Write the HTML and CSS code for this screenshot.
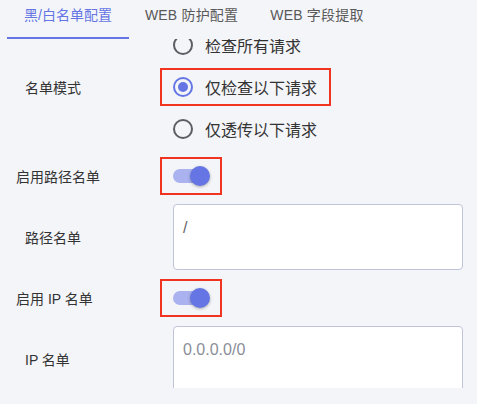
FILE: index.html
```html
<!DOCTYPE html>
<html lang="zh">
<head>
<meta charset="utf-8">
<link rel="stylesheet" href="styles.css">
</head>
<body>
<div class="tabs">
  <div class="tab active">黑/白名单配置</div>
  <div class="tab">WEB 防护配置</div>
  <div class="tab">WEB 字段提取</div>
</div>
<div class="viewport">
  <div class="content">
    <div class="row">
      <div class="label">名单模式</div>
      <div class="radios">
        <div class="option"><span class="radio"></span><span>检查所有请求</span></div>
        <div class="option marked"><span class="radio checked"></span><span>仅检查以下请求</span></div>
        <div class="option"><span class="radio"></span><span>仅透传以下请求</span></div>
      </div>
    </div>
    <div class="row">
      <div class="label label-switch">启用路径名单</div>
      <div class="switch-box marked"><span class="switch"><span class="thumb"></span></span></div>
    </div>
    <div class="row">
      <div class="label">路径名单</div>
      <div class="area">/</div>
    </div>
    <div class="row">
      <div class="label label-switch">启用 IP 名单</div>
      <div class="switch-box marked"><span class="switch"><span class="thumb"></span></span></div>
    </div>
    <div class="row">
      <div class="label">IP 名单</div>
      <div class="area placeholder">0.0.0.0/0</div>
    </div>
  </div>
</div>
</body>
</html>
```
FILE: styles.css
```css
* { box-sizing: border-box; }
html, body {
  margin: 0;
  background: #f4f5f9;
  font-family: "Liberation Sans", "Noto Sans CJK SC", sans-serif;
  color: #333;
}
.tabs {
  display: flex;
  height: 39px;
  padding-left: 7px;
}
.tab {
  padding: 0 16px;
  font-size: 14px;
  color: #595959;
  line-height: 30px;
  height: 39px;
  border-bottom: 2px solid transparent;
  letter-spacing: 0.2px;
}
.tab.active {
  color: #6576e4;
  border-bottom-color: #6576e4;
  padding: 0 17px;
  letter-spacing: 0;
}
.viewport {
  height: 349px;
  overflow: hidden;
}
.content {
  margin-top: -13px;
  display: flex;
  flex-direction: column;
  gap: 9px;
}
.row {
  display: flex;
  align-items: center;
}
.label {
  width: 160px;
  padding-left: 25px;
  font-size: 14px;
  color: #333;
}
.label-switch { padding-left: 16px; }
.radios {
  display: flex;
  flex-direction: column;
  gap: 4px;
}
.option {
  display: flex;
  align-items: center;
  gap: 12px;
  height: 38px;
  padding: 0 12px 0 11px;
  border: 2px solid transparent;
  font-size: 16px;
  color: #333;
}
.marked { border: 2px solid #f0341f; }
.radio {
  width: 20px;
  height: 20px;
  border-radius: 50%;
  border: 2px solid #5c5e66;
  display: flex;
  align-items: center;
  justify-content: center;
  flex: none;
}
.radio.checked { border-color: #6576e4; }
.radio.checked::after {
  content: "";
  width: 10px;
  height: 10px;
  border-radius: 50%;
  background: #6576e4;
}
.switch-box {
  width: 62px;
  height: 38px;
  padding-left: 11px;
  display: flex;
  align-items: center;
}
.switch {
  position: relative;
  width: 34px;
  height: 14px;
  border-radius: 7px;
  background: #aab2f0;
}
.thumb {
  position: absolute;
  left: 17px;
  top: -3px;
  width: 20px;
  height: 20px;
  border-radius: 50%;
  background: #6576e4;
  box-shadow: 0 1px 3px rgba(0, 0, 0, 0.3);
}
.area {
  margin-left: 13px;
  width: 290px;
  height: 66px;
  background: #fff;
  border: 1px solid #bfc4d9;
  border-radius: 4px;
  padding: 11px 9px 9px;
  font-size: 16px;
  line-height: 24px;
  color: #666;
}
.area.placeholder { color: #8a8e98; }
```
